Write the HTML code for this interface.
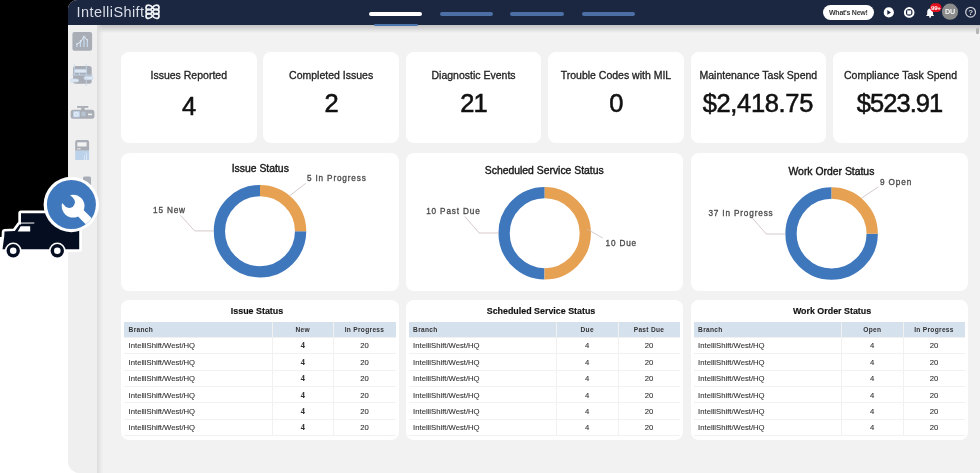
<!DOCTYPE html>
<html><head><meta charset="utf-8"><style>
*{margin:0;padding:0;box-sizing:border-box}
html,body{width:980px;height:473px;overflow:hidden;background:#fff;font-family:"Liberation Sans",sans-serif;position:relative}
#root{position:absolute;left:0;top:0;width:980px;height:473px;will-change:transform}
.abs{position:absolute}
#app{left:68px;top:0;width:912px;height:473px;background:#f2f2f2;border-radius:9px 0 0 12px;overflow:hidden}
#nav{left:0;top:0;width:912px;height:25.1px;background:#1b2640}
#side{left:0;top:25px;width:29px;height:448px;background:#efefef}
#sshadow{left:28.5px;top:25px;width:6px;height:448px;background:linear-gradient(90deg,#dcdcdc,rgba(242,242,242,0))}
#nshadow{left:28.5px;top:25px;width:884px;height:8px;background:linear-gradient(180deg,#c2c2c2,rgba(242,242,242,0))}
.card{position:absolute;background:#fff;border-radius:8px}
.kt{position:absolute;left:0;right:0;top:17.5px;text-align:center;font-size:10.5px;color:#222;-webkit-text-stroke:0.3px #222;white-space:nowrap}
.kv{position:absolute;left:0;right:0;top:37.5px;text-align:center;font-size:25.5px;letter-spacing:-0.8px;color:#111;-webkit-text-stroke:0.55px #111;white-space:nowrap}
.dt{position:absolute;left:0;right:0;top:10.3px;text-align:center;font-size:10.4px;color:#1a1a1a;-webkit-text-stroke:0.4px #1a1a1a;white-space:nowrap}
.lbl{position:absolute;font-size:8.2px;letter-spacing:0.85px;color:#505050;-webkit-text-stroke:0.32px #4a4a4a;white-space:nowrap;line-height:10px}
.tt{position:absolute;left:0;right:0;top:5.5px;text-align:center;font-size:8.9px;font-weight:bold;color:#111;-webkit-text-stroke:0.15px #111;white-space:nowrap}
.tb{position:absolute;left:3px;top:21.5px;width:271.5px}
.th{position:absolute;left:0;top:0;width:271.5px;height:15px;background:#d6e1ee}
.hc{position:absolute;top:4.3px;font-size:6.6px;letter-spacing:0.3px;font-weight:bold;color:#333;white-space:nowrap;line-height:7px}
.row{position:absolute;left:0;width:271.5px;height:16.4px;border-top:1px solid #f1f1f1}
.c1{position:absolute;left:4.6px;top:4.5px;font-size:7.7px;color:#333;-webkit-text-stroke:0.1px #333;white-space:nowrap;line-height:8px}
.c2,.c3{position:absolute;top:4.5px;font-size:7.7px;color:#333;-webkit-text-stroke:0.1px #333;text-align:center;white-space:nowrap;line-height:8px}
.vd{position:absolute;top:0;width:1px;height:113.5px;background:#f1f1f1}
</style></head><body><div id="root">

<div class="abs" style="left:60px;top:0;width:20px;height:20px;background:#000"></div>
<div id="app" class="abs">
  <div id="nav" class="abs">
    <div class="abs" style="left:8.6px;top:4.2px;font-size:14.5px;color:#d9dde6;letter-spacing:0.42px;line-height:17px">IntelliShift</div>
    <svg class="abs" style="left:76px;top:2px" width="18" height="19" viewBox="144 2 18 19">
      <g fill="none" stroke="#eef0f4" stroke-width="1.75" stroke-linecap="round">
        <path d="M146,7.5 C146,4.2 150.5,4.2 152.5,7.5 C154.5,10.8 159,10.8 159,7.5 C159,4.2 154.5,4.2 152.5,7.5 C150.5,10.8 146,10.8 146,7.5 Z"/>
        <path d="M146,11.7 C146,8.4 150.5,8.4 152.5,11.7 C154.5,15 159,15 159,11.7 C159,8.4 154.5,8.4 152.5,11.7 C150.5,15 146,15 146,11.7 Z"/>
        <path d="M146,15.9 C146,12.6 150.5,12.6 152.5,15.9 C154.5,19.2 159,19.2 159,15.9 C159,12.6 154.5,12.6 152.5,15.9 C150.5,19.2 146,19.2 146,15.9 Z"/>
      </g>
    </svg>
  </div>
  <div id="side" class="abs"></div>
  <div id="nshadow" class="abs"></div>
  <div id="sshadow" class="abs"></div>
  <div class="abs" style="left:908px;top:27.5px;width:2.5px;height:6px;background:#b5b5b5;border-radius:1px"></div>
</div>
<div class="abs" style="left:368.7px;top:12.4px;width:53.6px;height:3.3px;border-radius:2px;background:#fff"></div>
<div class="abs" style="left:373.6px;top:23.8px;width:44px;height:2.2px;border-radius:1px;background:#4c74ad"></div>
<div class="abs" style="left:439.6px;top:12.4px;width:53.9px;height:3.3px;border-radius:2px;background:#4c6fa6"></div>
<div class="abs" style="left:510.4px;top:12.4px;width:53.9px;height:3.3px;border-radius:2px;background:#4c6fa6"></div>
<div class="abs" style="left:581.6px;top:12.4px;width:53.9px;height:3.3px;border-radius:2px;background:#4c6fa6"></div>
<div class="abs" style="left:823px;top:5px;width:51.3px;height:15.4px;border-radius:8px;background:#fff"></div>
<div class="abs" style="left:829px;top:8.5px;font-size:7px;font-weight:bold;color:#3a3a3a;line-height:8px;letter-spacing:-0.25px">What's New!</div>
<svg class="abs" style="left:880px;top:0" width="100" height="25" viewBox="880 0 100 25">
  <circle cx="888.8" cy="12.4" r="5.1" fill="#fff"/>
  <path d="M887.3,10 L891,12.4 L887.3,14.8 Z" fill="#1b2640"/>
  <circle cx="909.2" cy="12.4" r="4.3" fill="none" stroke="#fff" stroke-width="2"/>
  <rect x="907.2" y="10.4" width="4" height="4" fill="#fff"/>
  <path d="M926,16 L934.2,16 L933,14.5 L933,12 C933,9.8 931.8,8.6 930.1,8.6 C928.4,8.6 927.2,9.8 927.2,12 L927.2,14.5 Z" fill="#fff"/>
  <circle cx="930.1" cy="16.8" r="1" fill="#fff"/>
  <rect x="930" y="3.2" width="11.5" height="8.8" rx="4.4" fill="#e5101c"/>
  <text x="935.8" y="10.3" font-family="Liberation Sans" font-size="6.2" font-weight="bold" fill="#fff" text-anchor="middle" letter-spacing="-0.3">99+</text>
  <circle cx="950" cy="11.7" r="8.1" fill="#8b8b8b"/>
  <text x="950" y="14.3" font-family="Liberation Sans" font-size="7.2" font-weight="bold" fill="#f4f4f4" text-anchor="middle" letter-spacing="-0.2">DU</text>
  <circle cx="970.6" cy="12.2" r="4.9" fill="none" stroke="#d0d3da" stroke-width="1.2"/>
  <text x="970.6" y="15.2" font-family="Liberation Sans" font-size="8" font-weight="bold" fill="#d0d3da" text-anchor="middle">?</text>
</svg>


<svg class="abs" style="left:68px;top:25px" width="30" height="170" viewBox="68 25 30 170">
  <rect x="72.4" y="32.1" width="19.7" height="18.7" rx="2" fill="#a9adb5"/>
  <g fill="#c7d9ee"><rect x="76.3" y="43" width="1.3" height="4"/><rect x="79.8" y="40" width="1.3" height="7"/><rect x="83.3" y="37" width="1.3" height="10"/><rect x="86.7" y="39" width="1.3" height="8"/></g>
  <polyline points="76.5,44.5 80.5,42 84,36.5 87.5,40.5" fill="none" stroke="#eef3f8" stroke-width="0.9"/><circle cx="84" cy="37" r="1.3" fill="#cfe0f2"/>
  <rect x="73.1" y="66.1" width="18.6" height="17.6" rx="2.5" fill="#a9adb5"/>
  <g fill="none" stroke="#c7d9ee" stroke-width="0.8">
    <rect x="74.5" y="69.5" width="12" height="3" rx="1.5" fill="#dfe8f2"/>
    <rect x="70.5" y="79" width="8" height="3" rx="1.5" fill="#dfe8f2"/>
    <rect x="84" y="76.5" width="9" height="3" rx="1.5" fill="#dfe8f2"/>
    <path d="M72,75 L93,75 M86.3,64 L86.3,86 M74.4,64 L74.4,75 M79.5,72 L79.5,75"/>
  </g>
  <rect x="77.1" y="106" width="11.2" height="1.8" fill="#a9adb5"/>
  <rect x="81.2" y="107.5" width="3.4" height="2.5" fill="#a9adb5"/>
  <rect x="70.7" y="109.8" width="23.7" height="8.9" rx="2.5" fill="#a9adb5"/>
  <rect x="73.1" y="111.2" width="6.7" height="6.1" fill="#c5d8ee"/>
  <circle cx="76.4" cy="114.2" r="1.8" fill="none" stroke="#f4f7fb" stroke-width="0.9"/>
  <rect x="81.5" y="111.8" width="4" height="4.5" fill="#b7c4d2"/>
  <rect x="88" y="113.6" width="4" height="1.6" fill="#f0f0f0"/>
  <path d="M75.2,142 Q75.2,140.1 77.2,140.1 L87.1,140.1 Q89.1,140.1 89.1,142 L89.1,150.7 L75.2,150.7 Z" fill="#a9adb5"/>
  <rect x="77.3" y="142.3" width="9.3" height="4.2" fill="#f2f2f2"/>
  <rect x="77.3" y="148" width="1.2" height="1.5" fill="#eee"/><rect x="79.2" y="148" width="1.2" height="1.5" fill="#eee"/>
  <rect x="75.2" y="150.7" width="13.9" height="9.3" fill="#bcd1ea"/>
  <path d="M84.5,160 L84.5,155 M86.5,160 L86.5,153.5 L85.5,152.5" fill="none" stroke="#eef3f9" stroke-width="0.6"/>
  <rect x="83" y="176.5" width="8" height="10" rx="1.5" fill="#a9adb5"/>
</svg>

<div class="card" style="left:121.0px;top:51.5px;width:135.5px;height:91.5px"><div class="kt">Issues Reported</div><div class="kv" style="top:40.5px">4</div></div>
<div class="card" style="left:263.4px;top:51.5px;width:135.5px;height:91.5px"><div class="kt">Completed Issues</div><div class="kv" style="">2</div></div>
<div class="card" style="left:405.8px;top:51.5px;width:135.5px;height:91.5px"><div class="kt">Diagnostic Events</div><div class="kv" style="">21</div></div>
<div class="card" style="left:548.2px;top:51.5px;width:135.5px;height:91.5px"><div class="kt">Trouble Codes with MIL</div><div class="kv" style="">0</div></div>
<div class="card" style="left:690.6px;top:51.5px;width:135.5px;height:91.5px"><div class="kt">Maintenance Task Spend</div><div class="kv" style=";letter-spacing:-0.35px;left:-0.5px;right:0.5px">$2,418.75</div></div>
<div class="card" style="left:833.0px;top:51.5px;width:135.0px;height:91.5px"><div class="kt">Compliance Task Spend</div><div class="kv" style=";letter-spacing:-0.95px;left:-1px;right:1px">$523.91</div></div>
<div class="card" style="left:121px;top:152.5px;width:277.5px;height:138.5px"><div class="dt" style="left:0.5px;right:-0.5px;top:10.5px">Issue Status</div></div>
<div class="card" style="left:405.5px;top:152.5px;width:277.5px;height:138.5px"><div class="dt" style="left:0px;right:0px;top:12.3px">Scheduled Service Status</div></div>
<div class="card" style="left:690.5px;top:152.5px;width:277.5px;height:138.5px"><div class="dt" style="left:2.2px;right:-2.2px;top:13.3px">Work Order Status</div></div>
<svg class="abs" style="left:0;top:0" width="980" height="473" viewBox="0 0 980 473">
<circle cx="260" cy="231.2" r="40.6" fill="none" stroke="#3e77bc" stroke-width="11.3" stroke-dasharray="0 63.77 191.32 255.10" transform="rotate(-90 260 231.2)"/>
<circle cx="260" cy="231.2" r="40.6" fill="none" stroke="#e6a153" stroke-width="11.3" stroke-dasharray="63.77 255.10" transform="rotate(-90 260 231.2)"/>
<circle cx="544.7" cy="233.2" r="40.6" fill="none" stroke="#3e77bc" stroke-width="11.3" stroke-dasharray="0 127.55 127.55 255.10" transform="rotate(-90 544.7 233.2)"/>
<circle cx="544.7" cy="233.2" r="40.6" fill="none" stroke="#e6a153" stroke-width="11.3" stroke-dasharray="127.55 255.10" transform="rotate(-90 544.7 233.2)"/>
<circle cx="831.6" cy="233.6" r="40.6" fill="none" stroke="#3e77bc" stroke-width="11.3" stroke-dasharray="0 63.77 191.32 255.10" transform="rotate(-90 831.6 233.6)"/>
<circle cx="831.6" cy="233.6" r="40.6" fill="none" stroke="#e6a153" stroke-width="11.3" stroke-dasharray="63.77 255.10" transform="rotate(-90 831.6 233.6)"/>
<polyline points="180.5,215.3 194.6,230.9 213.8,230.9" fill="none" stroke="#cbbcbc" stroke-width="0.8"/>
<polyline points="305.7,183.4 289.6,195.8" fill="none" stroke="#cbbcbc" stroke-width="0.8"/>
<polyline points="464.8,216.5 479.2,233 498.8,233" fill="none" stroke="#cbbcbc" stroke-width="0.8"/>
<polyline points="587.2,229.2 602.8,238.1" fill="none" stroke="#cbbcbc" stroke-width="0.8"/>
<polyline points="751.6,217.1 766.2,234 785.5,234" fill="none" stroke="#cbbcbc" stroke-width="0.8"/>
<polyline points="878.5,186.8 861.6,198" fill="none" stroke="#cbbcbc" stroke-width="0.8"/>
</svg>
<div class="lbl" style="left:153.0px;top:205.8px">15 New</div>
<div class="lbl" style="left:306.9px;top:173.7px">5 In Progress</div>
<div class="lbl" style="left:426.2px;top:207.1px">10 Past Due</div>
<div class="lbl" style="left:605.5px;top:238.6px">10 Due</div>
<div class="lbl" style="left:708.4px;top:208.6px">37 In Progress</div>
<div class="lbl" style="left:880.1px;top:178.0px">9 Open</div>
<div class="card" style="left:121px;top:300.4px;width:277.5px;height:140px"><div class="tt" style="left:-2.75px;right:2.75px">Issue Status</div>
<div class="tb"><div class="th"><div class="hc" style="left:4.6px">Branch</div><div class="hc" style="left:148px;width:61.5px;text-align:center">New</div><div class="hc" style="left:209.5px;width:62px;text-align:center">In Progress</div></div>
<div class="row" style="top:15.0px"><div class="c1">IntelliShift/West/HQ</div><div class="c2" style="left:148px;width:61.5px;font-family:Liberation Serif;font-weight:bold;font-size:8.2px">4</div><div class="c3" style="left:209.5px;width:62px">20</div></div><div class="row" style="top:31.4px"><div class="c1">IntelliShift/West/HQ</div><div class="c2" style="left:148px;width:61.5px;font-family:Liberation Serif;font-weight:bold;font-size:8.2px">4</div><div class="c3" style="left:209.5px;width:62px">20</div></div><div class="row" style="top:47.8px"><div class="c1">IntelliShift/West/HQ</div><div class="c2" style="left:148px;width:61.5px;font-family:Liberation Serif;font-weight:bold;font-size:8.2px">4</div><div class="c3" style="left:209.5px;width:62px">20</div></div><div class="row" style="top:64.2px"><div class="c1">IntelliShift/West/HQ</div><div class="c2" style="left:148px;width:61.5px;font-family:Liberation Serif;font-weight:bold;font-size:8.2px">4</div><div class="c3" style="left:209.5px;width:62px">20</div></div><div class="row" style="top:80.6px"><div class="c1">IntelliShift/West/HQ</div><div class="c2" style="left:148px;width:61.5px;font-family:Liberation Serif;font-weight:bold;font-size:8.2px">4</div><div class="c3" style="left:209.5px;width:62px">20</div></div><div class="row" style="top:97.0px"><div class="c1">IntelliShift/West/HQ</div><div class="c2" style="left:148px;width:61.5px;font-family:Liberation Serif;font-weight:bold;font-size:8.2px">4</div><div class="c3" style="left:209.5px;width:62px">20</div></div>
<div class="row" style="top:113.4px;height:1px"></div><div class="vd" style="left:147.7px"></div><div class="vd" style="left:209.2px"></div>
</div></div>
<div class="card" style="left:405.5px;top:300.4px;width:277.5px;height:140px"><div class="tt" style="left:-3.25px;right:3.25px">Scheduled Service Status</div>
<div class="tb"><div class="th"><div class="hc" style="left:4.6px">Branch</div><div class="hc" style="left:148px;width:61.5px;text-align:center">Due</div><div class="hc" style="left:209.5px;width:62px;text-align:center">Past Due</div></div>
<div class="row" style="top:15.0px"><div class="c1">IntelliShift/West/HQ</div><div class="c2" style="left:148px;width:61.5px">4</div><div class="c3" style="left:209.5px;width:62px">20</div></div><div class="row" style="top:31.4px"><div class="c1">IntelliShift/West/HQ</div><div class="c2" style="left:148px;width:61.5px">4</div><div class="c3" style="left:209.5px;width:62px">20</div></div><div class="row" style="top:47.8px"><div class="c1">IntelliShift/West/HQ</div><div class="c2" style="left:148px;width:61.5px">4</div><div class="c3" style="left:209.5px;width:62px">20</div></div><div class="row" style="top:64.2px"><div class="c1">IntelliShift/West/HQ</div><div class="c2" style="left:148px;width:61.5px">4</div><div class="c3" style="left:209.5px;width:62px">20</div></div><div class="row" style="top:80.6px"><div class="c1">IntelliShift/West/HQ</div><div class="c2" style="left:148px;width:61.5px">4</div><div class="c3" style="left:209.5px;width:62px">20</div></div><div class="row" style="top:97.0px"><div class="c1">IntelliShift/West/HQ</div><div class="c2" style="left:148px;width:61.5px">4</div><div class="c3" style="left:209.5px;width:62px">20</div></div>
<div class="row" style="top:113.4px;height:1px"></div><div class="vd" style="left:147.7px"></div><div class="vd" style="left:209.2px"></div>
</div></div>
<div class="card" style="left:690.5px;top:300.4px;width:277.5px;height:140px"><div class="tt" style="left:2.75px;right:-2.75px">Work Order Status</div>
<div class="tb"><div class="th"><div class="hc" style="left:4.6px">Branch</div><div class="hc" style="left:148px;width:61.5px;text-align:center">Open</div><div class="hc" style="left:209.5px;width:62px;text-align:center">In Progress</div></div>
<div class="row" style="top:15.0px"><div class="c1">IntelliShift/West/HQ</div><div class="c2" style="left:148px;width:61.5px">4</div><div class="c3" style="left:209.5px;width:62px">20</div></div><div class="row" style="top:31.4px"><div class="c1">IntelliShift/West/HQ</div><div class="c2" style="left:148px;width:61.5px">4</div><div class="c3" style="left:209.5px;width:62px">20</div></div><div class="row" style="top:47.8px"><div class="c1">IntelliShift/West/HQ</div><div class="c2" style="left:148px;width:61.5px">4</div><div class="c3" style="left:209.5px;width:62px">20</div></div><div class="row" style="top:64.2px"><div class="c1">IntelliShift/West/HQ</div><div class="c2" style="left:148px;width:61.5px">4</div><div class="c3" style="left:209.5px;width:62px">20</div></div><div class="row" style="top:80.6px"><div class="c1">IntelliShift/West/HQ</div><div class="c2" style="left:148px;width:61.5px">4</div><div class="c3" style="left:209.5px;width:62px">20</div></div><div class="row" style="top:97.0px"><div class="c1">IntelliShift/West/HQ</div><div class="c2" style="left:148px;width:61.5px">4</div><div class="c3" style="left:209.5px;width:62px">20</div></div>
<div class="row" style="top:113.4px;height:1px"></div><div class="vd" style="left:147.7px"></div><div class="vd" style="left:209.2px"></div>
</div></div>

<svg class="abs" style="left:0;top:0" width="110" height="262" viewBox="0 0 110 262">
  <path d="M0,0 L68,0 L68,213 L21,213 L21,224.5 L19.5,224.5 L14.8,231 L4.4,231.5 L4.2,237 L0,237 Z" fill="#000"/>
  <path d="M21,213.2 L79.2,213.2 L79.2,249.2 L2.5,249.2 L4.3,236 L4.5,231.6 L14.8,231.1 L19.5,224.5 L21,224.5 Z" fill="#fff" stroke="#fff" stroke-width="5.4" stroke-linejoin="round"/>
  <path d="M21,213.2 L79.2,213.2 L79.2,249.2 L2.5,249.2 L4.3,236 L4.5,231.6 L14.8,231.1 L19.5,224.5 L21,224.5 Z" fill="#050d20"/>
  <path d="M19.5,223.1 L34.3,223" stroke="#fff" stroke-width="1"/>
  <path d="M17.75,231.5 L20.7,226.2 L30.2,226.2 L30.2,231.5 Z" fill="#fff"/>
  <circle cx="13.2" cy="250.8" r="8.3" fill="#fff"/>
  <circle cx="57.3" cy="250.8" r="8.3" fill="#fff"/>
  <circle cx="13.2" cy="250.8" r="6.7" fill="#050d20"/>
  <circle cx="57.3" cy="250.8" r="6.7" fill="#050d20"/>
  <circle cx="13.2" cy="250.8" r="3.3" fill="#fff"/>
  <circle cx="57.3" cy="250.8" r="3.3" fill="#fff"/>
  <circle cx="71.3" cy="204.5" r="27.7" fill="#fff"/>
  <circle cx="71.4" cy="204.5" r="24.5" fill="#3f78bc"/>
  <defs>
    <clipPath id="wc"><circle cx="71.4" cy="204.5" r="24.5"/></clipPath>
    <mask id="wm"><rect x="40" y="170" width="70" height="70" fill="#fff"/>
      <circle cx="69.3" cy="202.3" r="5.6" fill="#000"/>
      <path d="M65.3,206.3 L73.3,198.3 L64.3,189.3 L56.3,197.3 Z" fill="#000"/>
    </mask>
  </defs>
  <g fill="#fff" mask="url(#wm)" clip-path="url(#wc)">
    <circle cx="73.1" cy="206.1" r="11.4"/>
    <path d="M76.5,203 L100,226.5 L94,232.5 L70.5,209 Z"/>
  </g>
</svg>

</div></body></html>
